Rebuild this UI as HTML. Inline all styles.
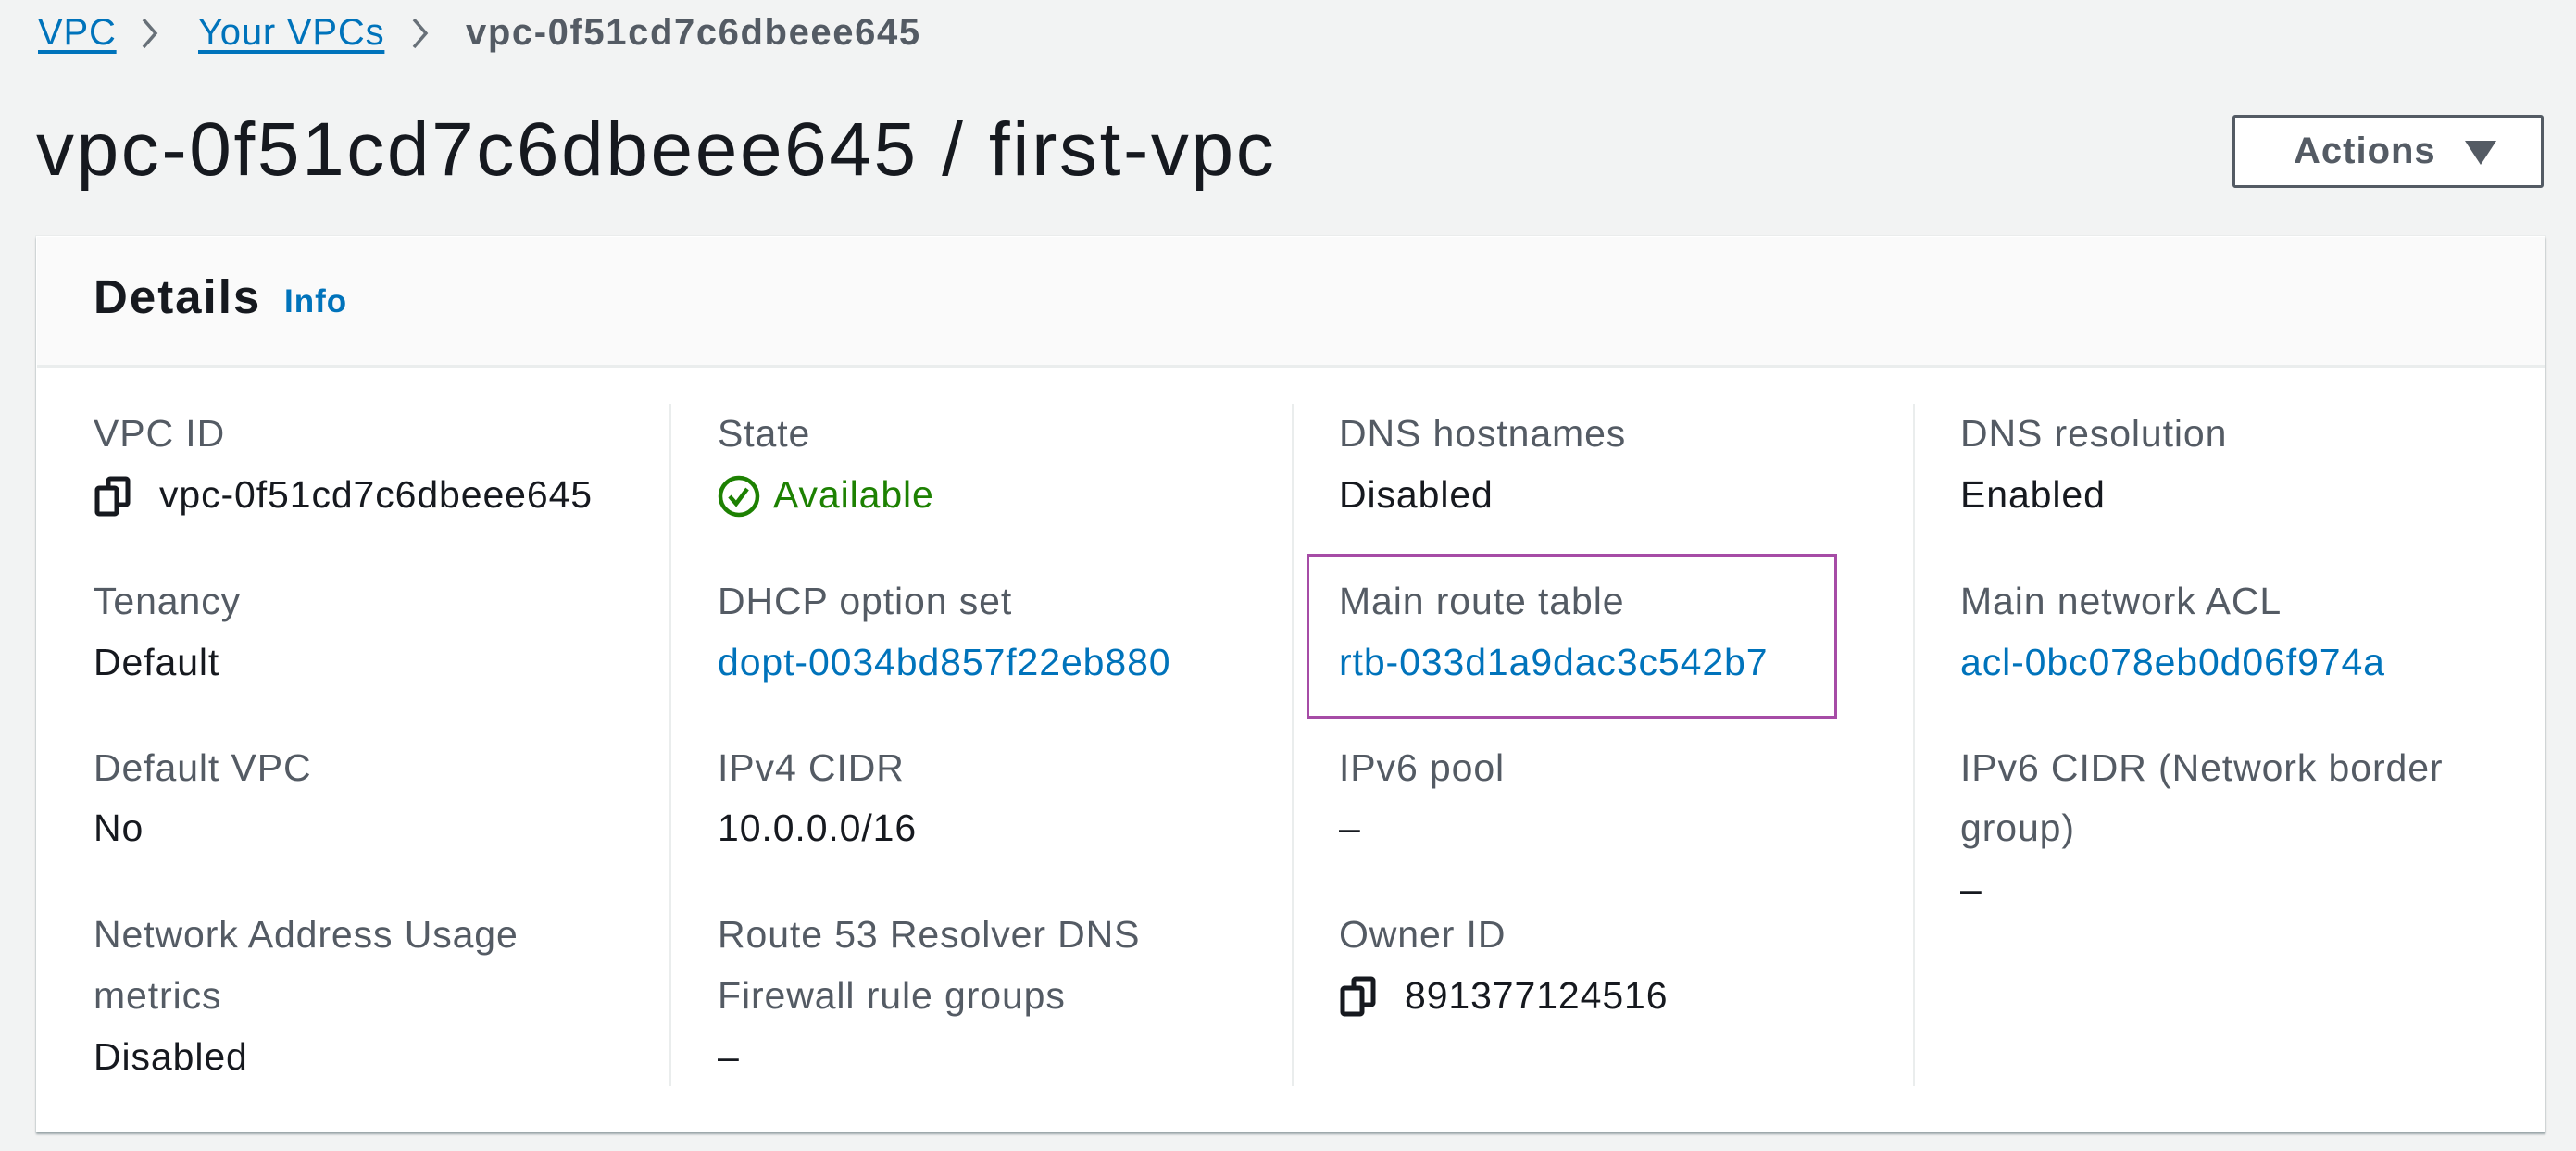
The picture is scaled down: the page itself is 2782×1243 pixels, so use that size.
<!DOCTYPE html>
<html><head><meta charset="utf-8"><style>
*{margin:0;padding:0;box-sizing:border-box}
body{width:2782px;height:1243px;background:#f2f3f3;font-family:"Liberation Sans",sans-serif;position:relative;overflow:hidden;color:#16191f}
.a{position:absolute;white-space:nowrap}
.t{font-size:41px;line-height:66px;letter-spacing:0.9px}
.l{color:#545b64}
.v{color:#16191f}
.k{color:#0073bb}
.bc{font-size:40px;line-height:50px;top:10px;letter-spacing:0.8px}
.div{position:absolute;top:436px;width:2px;height:737px;background:#eaeded}
</style></head><body>
<div class="a bc k" style="left:41px;text-decoration:underline;text-underline-offset:6px">VPC</div>
<svg class="a" style="left:150px;top:18px" width="24" height="36" viewBox="0 0 24 36"><path d="M5 3 L18 18 L5 33" fill="none" stroke="#687078" stroke-width="3.5"/></svg>
<div class="a bc k" style="left:214px;text-decoration:underline;text-underline-offset:6px">Your VPCs</div>
<div class="a" style="left:442px;top:18px"><svg width="24" height="36" viewBox="0 0 24 36"><path d="M5 3 L18 18 L5 33" fill="none" stroke="#687078" stroke-width="3.5"/></svg></div>
<div class="a bc" style="left:503px;color:#545b64;font-weight:bold;letter-spacing:1.6px">vpc-0f51cd7c6dbeee645</div>
<div class="a" style="left:39px;top:112px;font-size:82px;line-height:100px;letter-spacing:2.6px">vpc-0f51cd7c6dbeee645 / first-vpc</div>
<div class="a" style="left:2411px;top:124px;width:336px;height:79px;border:3px solid #545b64;border-radius:3px;background:#fff;font-weight:bold;font-size:40px;letter-spacing:1px;color:#545b64;line-height:73px;padding-left:63px">Actions<svg style="position:absolute;left:247px;top:24px" width="36" height="28" viewBox="0 0 36 28"><path d="M1 1 H35 L18 27 Z" fill="#545b64"/></svg></div>
<div class="a" style="left:39px;top:255px;width:2710px;height:968px;background:#fff;box-shadow:0 2px 2px rgba(0,28,36,.35),0 0 0 1px #eaeded"></div>
<div class="a" style="left:40px;top:256px;width:2708px;height:141px;background:#fafafa;border-bottom:3px solid #eaeded"></div>
<div class="a" style="left:101px;top:290px;font-size:51px;line-height:62px;font-weight:bold;letter-spacing:2px">Details</div>
<div class="a k" style="left:307px;top:306px;font-size:35px;line-height:40px;font-weight:bold;letter-spacing:1px">Info</div>
<div class="div" style="left:723px"></div>
<div class="div" style="left:1395px"></div>
<div class="div" style="left:2066px"></div>

<div class="a t l" style="left:101px;top:435px">VPC ID</div>
<svg class="a" style="left:101px;top:514px" width="44" height="44" viewBox="0 0 44 44"><rect x="16" y="3" width="21" height="28" rx="2" fill="none" stroke="#16191f" stroke-width="5"/><rect x="4" y="13" width="21" height="28" rx="2" fill="#fff" stroke="#16191f" stroke-width="5"/></svg>
<div class="a t v" style="left:172px;top:501px">vpc-0f51cd7c6dbeee645</div>
<div class="a t l" style="left:101px;top:616px">Tenancy</div>
<div class="a t v" style="left:101px;top:682px">Default</div>
<div class="a t l" style="left:101px;top:796px">Default VPC</div>
<div class="a t v" style="left:101px;top:861px">No</div>
<div class="a t l" style="left:101px;top:976px">Network Address Usage</div>
<div class="a t l" style="left:101px;top:1042px">metrics</div>
<div class="a t v" style="left:101px;top:1108px">Disabled</div>

<div class="a t l" style="left:775px;top:435px">State</div>
<svg class="a" style="left:774px;top:512px" width="48" height="48" viewBox="0 0 48 48"><circle cx="24" cy="24" r="20" fill="none" stroke="#1d8102" stroke-width="4.5"/><path d="M14 24 L21 32 L33 16" fill="none" stroke="#1d8102" stroke-width="4.5"/></svg>
<div class="a t" style="left:835px;top:501px;color:#1d8102">Available</div>
<div class="a t l" style="left:775px;top:616px">DHCP option set</div>
<div class="a t k" style="left:775px;top:682px">dopt-0034bd857f22eb880</div>
<div class="a t l" style="left:775px;top:796px">IPv4 CIDR</div>
<div class="a t v" style="left:775px;top:861px">10.0.0.0/16</div>
<div class="a t l" style="left:775px;top:976px">Route 53 Resolver DNS</div>
<div class="a t l" style="left:775px;top:1042px">Firewall rule groups</div>
<div class="a t v" style="left:775px;top:1108px">–</div>

<div class="a t l" style="left:1446px;top:435px">DNS hostnames</div>
<div class="a t v" style="left:1446px;top:501px">Disabled</div>
<div class="a" style="left:1411px;top:598px;width:573px;height:178px;border:3px solid #a64ca6"></div>
<div class="a t l" style="left:1446px;top:616px">Main route table</div>
<div class="a t k" style="left:1446px;top:682px">rtb-033d1a9dac3c542b7</div>
<div class="a t l" style="left:1446px;top:796px">IPv6 pool</div>
<div class="a t v" style="left:1446px;top:861px">–</div>
<div class="a t l" style="left:1446px;top:976px">Owner ID</div>
<svg class="a" style="left:1446px;top:1054px" width="44" height="44" viewBox="0 0 44 44"><rect x="16" y="3" width="21" height="28" rx="2" fill="none" stroke="#16191f" stroke-width="5"/><rect x="4" y="13" width="21" height="28" rx="2" fill="#fff" stroke="#16191f" stroke-width="5"/></svg>
<div class="a t v" style="left:1517px;top:1042px">891377124516</div>

<div class="a t l" style="left:2117px;top:435px">DNS resolution</div>
<div class="a t v" style="left:2117px;top:501px">Enabled</div>
<div class="a t l" style="left:2117px;top:616px">Main network ACL</div>
<div class="a t k" style="left:2117px;top:682px">acl-0bc078eb0d06f974a</div>
<div class="a t l" style="left:2117px;top:796px">IPv6 CIDR (Network border</div>
<div class="a t l" style="left:2117px;top:861px">group)</div>
<div class="a t v" style="left:2117px;top:927px">–</div>
</body></html>
